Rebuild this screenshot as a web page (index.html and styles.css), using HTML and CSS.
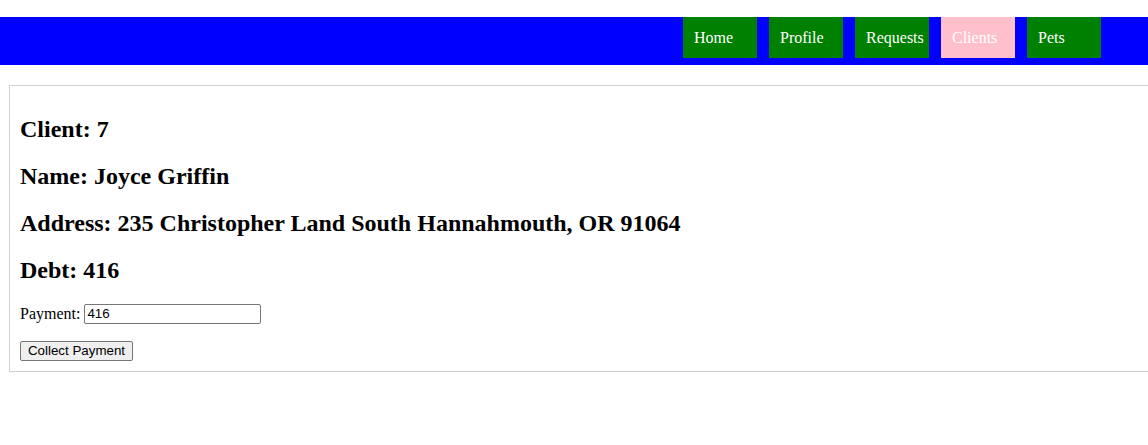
FILE: index.html
```html
<!DOCTYPE html>
<html lang="en">
<head>
<meta charset="utf-8">
<title>Client 7</title>
<link rel="stylesheet" href="styles.css">
</head>
<body>
<nav class="topnav">
  <a class="nav-item" href="#">Home</a>
  <a class="nav-item" href="#">Profile</a>
  <a class="nav-item" href="#">Requests</a>
  <a class="nav-item nav-item--active" href="#">Clients</a>
  <a class="nav-item" href="#">Pets</a>
</nav>
<main class="card">
  <h2 class="field">Client: 7</h2>
  <h2 class="field">Name: Joyce Griffin</h2>
  <h2 class="field">Address: 235 Christopher Land South Hannahmouth, OR 91064</h2>
  <h2 class="field">Debt: 416</h2>
  <form class="pay-form">
    <div class="pay-row">
      <label class="pay-label" for="payment">Payment:</label>
      <input class="pay-input" id="payment" type="text" value="416">
    </div>
    <button class="pay-button" type="button">Collect Payment</button>
  </form>
</main>
</body>
</html>
```
FILE: styles.css
```css
html, body {
  margin: 0;
  padding: 0;
  overflow: hidden;
  background: #ffffff;
  font-family: "Liberation Serif", "Times New Roman", serif;
  font-size: 16px;
  color: #000;
}

.topnav {
  margin-top: 17px;
  height: 48px;
  background: #0000ff;
  display: flex;
  justify-content: flex-end;
  align-items: flex-start;
  gap: 12px;
  padding-right: 47px;
}

.nav-item {
  display: block;
  box-sizing: border-box;
  width: 74px;
  height: 41px;
  padding: 11px 0 0 11px;
  background: #008000;
  color: #ffffff;
  text-decoration: none;
  font-size: 16px;
  line-height: 19px;
  white-space: nowrap;
}

.nav-item--active {
  background: #ffc0cb;
}

.card {
  display: block;
  margin: 20px 0 0 9px;
  width: 1200px;
  border: 1px solid #d0d0d0;
  padding: 10px;
}

.field {
  font-size: 24px;
  font-weight: bold;
  margin: 19.92px 0;
  line-height: 27px;
}

.pay-form {
  display: flex;
  flex-direction: column;
  align-items: flex-start;
  gap: 17px;
  margin-top: 19px;
}

.pay-row {
  display: flex;
  align-items: center;
  gap: 4px;
  height: 20px;
}

.pay-label {
  font-size: 16px;
}

.pay-input {
  box-sizing: border-box;
  width: 177px;
  height: 20px;
  margin: 0;
  padding: 1px 2px;
  border: 1px solid #767676;
  border-radius: 2px;
  font-family: "Liberation Sans", Arial, sans-serif;
  font-size: 13.33px;
  color: #000;
}

.pay-button {
  box-sizing: border-box;
  width: 113px;
  height: 20px;
  margin: 0;
  padding: 1px 6px;
  border: 1px solid #767676;
  border-radius: 2px;
  background: #efefef;
  font-family: "Liberation Sans", Arial, sans-serif;
  font-size: 13.33px;
  color: #000;
}
```
